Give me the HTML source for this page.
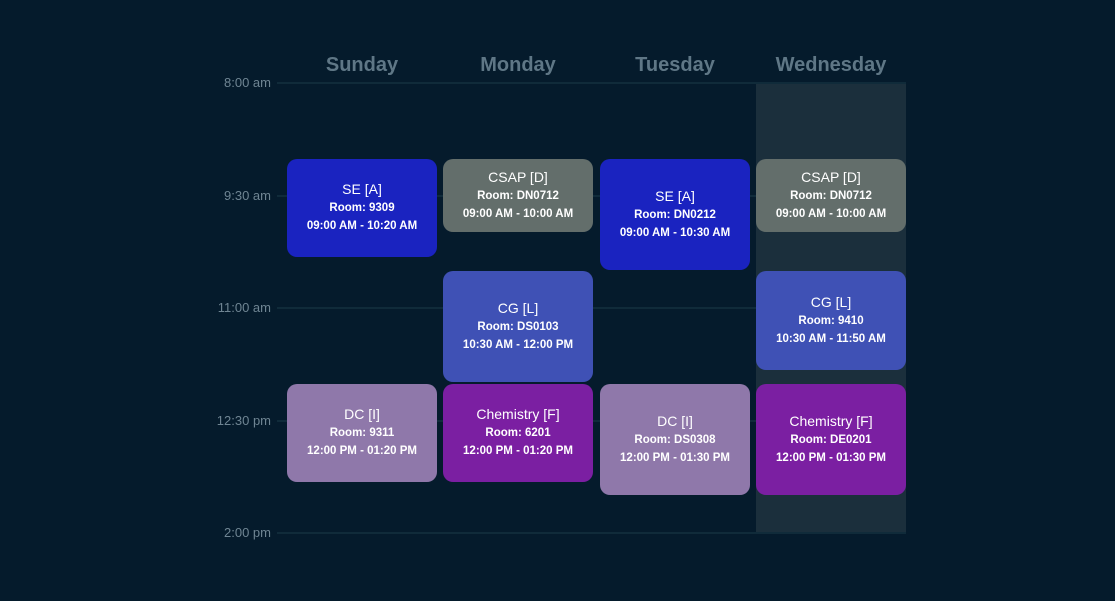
<!DOCTYPE html>
<html><head><style>
body{margin:0;width:1115px;height:601px;background:#051b2c;position:relative;overflow:hidden;font-family:"Liberation Sans",sans-serif}
.d{position:absolute;top:54px;width:150px;text-align:center;color:#5f7786;font-size:20px;font-weight:bold}
.t{position:absolute;left:200px;width:71px;text-align:right;color:#6f8593;font-size:13px}
.l{position:absolute;left:277px;width:629px;height:2px;background:#102b3a}
.hl{position:absolute;left:756px;top:83px;width:150px;height:450px;background:#1b2f3c}
.b{position:absolute;width:150px;border-radius:10px;color:#fff;display:flex;flex-direction:column;justify-content:center;align-items:center;text-align:center}
.b b{font-size:14px;font-weight:normal;margin-bottom:2px}
.b span{font-size:11.5px;font-weight:bold;line-height:18px}
.blue{background:#1a23c0}.gray{background:#636e6b}.ind{background:#3f51b5}.lav{background:#8f78aa}.pur{background:#7b1fa2}
</style></head><body>
<div class="hl"></div>
<div class="d" style="left:287px">Sunday</div>
<div class="d" style="left:443px">Monday</div>
<div class="d" style="left:600px">Tuesday</div>
<div class="d" style="left:756px">Wednesday</div>
<div class="t" style="top:75px">8:00 am</div><div class="l" style="top:82px"></div>
<div class="t" style="top:188px">9:30 am</div><div class="l" style="top:195px"></div>
<div class="t" style="top:300px">11:00 am</div><div class="l" style="top:307px"></div>
<div class="t" style="top:413px">12:30 pm</div><div class="l" style="top:420px"></div>
<div class="t" style="top:525px">2:00 pm</div><div class="l" style="top:532px"></div>

<div class="b blue" style="left:287px;top:159px;height:98px"><b>SE [A]</b><span>Room: 9309</span><span>09:00 AM - 10:20 AM</span></div>
<div class="b gray" style="left:443px;top:159px;height:73px"><b>CSAP [D]</b><span>Room: DN0712</span><span>09:00 AM - 10:00 AM</span></div>
<div class="b blue" style="left:600px;top:159px;height:111px"><b>SE [A]</b><span>Room: DN0212</span><span>09:00 AM - 10:30 AM</span></div>
<div class="b gray" style="left:756px;top:159px;height:73px"><b>CSAP [D]</b><span>Room: DN0712</span><span>09:00 AM - 10:00 AM</span></div>
<div class="b ind" style="left:443px;top:271px;height:111px"><b>CG [L]</b><span>Room: DS0103</span><span>10:30 AM - 12:00 PM</span></div>
<div class="b ind" style="left:756px;top:271px;height:99px"><b>CG [L]</b><span>Room: 9410</span><span>10:30 AM - 11:50 AM</span></div>
<div class="b lav" style="left:287px;top:384px;height:98px"><b>DC [I]</b><span>Room: 9311</span><span>12:00 PM - 01:20 PM</span></div>
<div class="b pur" style="left:443px;top:384px;height:98px"><b>Chemistry [F]</b><span>Room: 6201</span><span>12:00 PM - 01:20 PM</span></div>
<div class="b lav" style="left:600px;top:384px;height:111px"><b>DC [I]</b><span>Room: DS0308</span><span>12:00 PM - 01:30 PM</span></div>
<div class="b pur" style="left:756px;top:384px;height:111px"><b>Chemistry [F]</b><span>Room: DE0201</span><span>12:00 PM - 01:30 PM</span></div>
</body></html>
